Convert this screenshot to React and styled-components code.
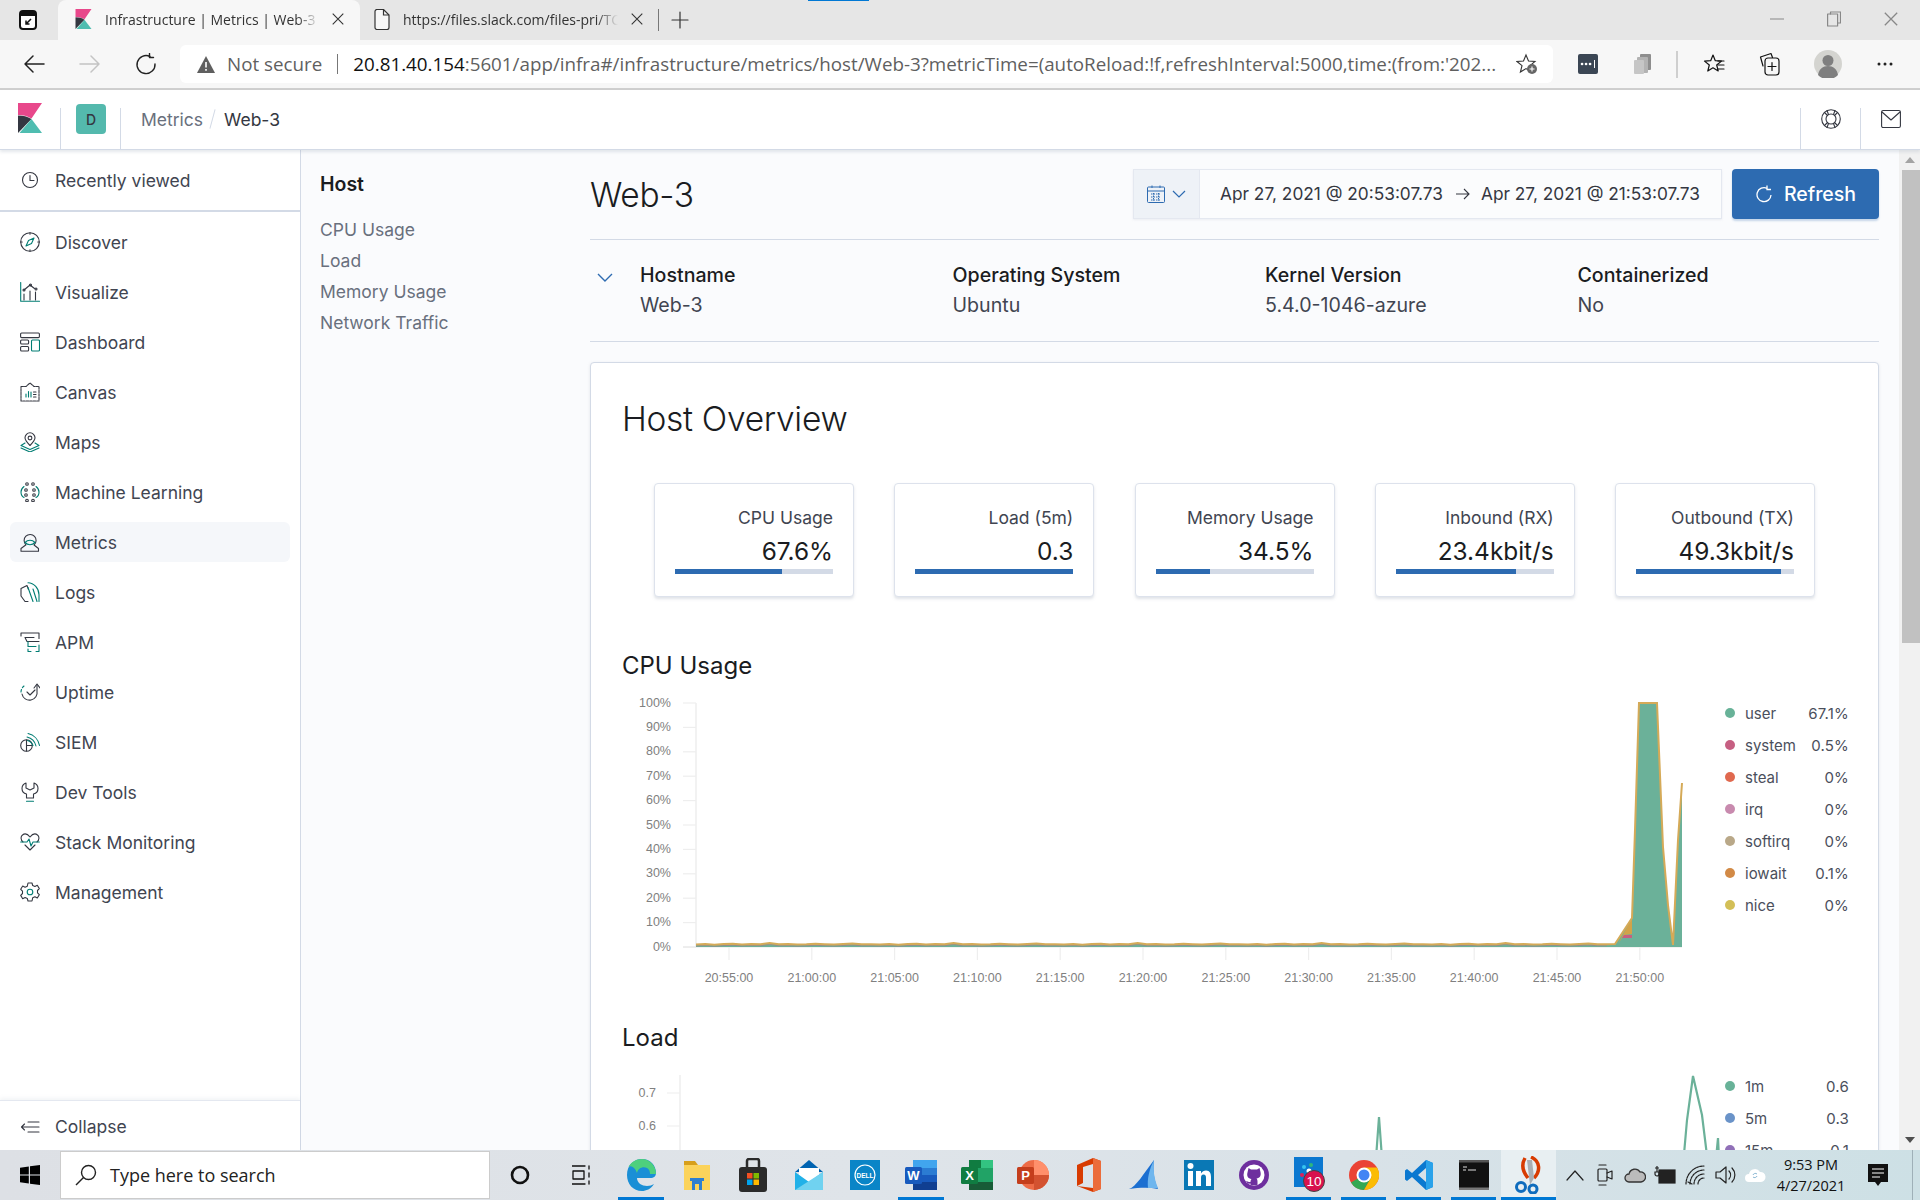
import React from "react";
import styled, { createGlobalStyle } from "styled-components";

const Global = createGlobalStyle`
  html, body { margin: 0; padding: 0; background: #fff; }
  #root { width: 1920px; height: 1200px; overflow: hidden; }
  * { box-sizing: border-box; }
`;

const Page = styled.div`
  width: 1920px; height: 1200px; display: flex; flex-direction: column; overflow: hidden;
  font-family: Inter, "Liberation Sans", sans-serif; color: #343741;
`;

/* ---------- browser chrome ---------- */
const TabStrip = styled.div`
  height: 40px; flex: none; background: #e6e6e6; display: flex; align-items: stretch; position: relative;
  font-family: "Open Sans", "Noto Sans", sans-serif; font-size: 14px; color: #333;
`;
const TopMark = styled.div`position: absolute; left: 808px; top: 0; width: 61px; height: 1px; background: #0078d4;`;
const AppMenu = styled.div`width: 58px; display: flex; align-items: center; justify-content: center; padding-right: 3px;`;
const Tab = styled.div`
  width: ${p => p.$w}px; display: flex; align-items: center; gap: 13px; padding: 0 16px 2px ${p => p.$pad}px;
  border-radius: 8px 8px 0 0; background: ${p => (p.$active ? "#f7f7f7" : "transparent")};
  white-space: nowrap; overflow: hidden;
`;
const TabTitle = styled.span`
  flex: 1; overflow: hidden; white-space: nowrap;
  mask-image: linear-gradient(to right, #000 90%, transparent);
`;
const TabSep = styled.div`width: 1px; height: 22px; background: #777; align-self: center; margin: 0 11px 0 -1px;`;
const NewTab = styled.div`width: 20px; display: flex; align-items: center; justify-content: center;`;
const WinButtons = styled.div`margin-left: auto; display: flex; align-items: center; padding-right: 1px;`;
const WinButton = styled.div`width: 57px; display: flex; justify-content: center; padding-bottom: 2px;`;

const Toolbar = styled.div`
  height: 50px; flex: none; background: #f7f7f7; border-bottom: 2px solid #cfcfcf;
  display: flex; align-items: flex-start; padding-top: 5px;
  font-family: "Open Sans", "Noto Sans", sans-serif;
`;
const NavIcons = styled.div`width: 180px; height: 38px; display: flex; align-items: center; padding-left: 6px;`;
const NavIcon = styled.div`width: 56px; display: flex; justify-content: center;`;
const Address = styled.div`
  width: 1373px; height: 38px; background: #fff; border-radius: 6px; display: flex; align-items: center;
  padding: 0 15px 0 17px; font-size: 18.8px; color: #5f5f5f; white-space: nowrap;
`;
const Secure = styled.span`margin-left: 12px;`;
const Pipe = styled.span`width: 1px; height: 20px; background: #777; margin: 0 15px;`;
const UrlHost = styled.span`color: #111;`;
const Url = styled.span`flex: 1; overflow: hidden;`;
const ToolIcons = styled.div`flex: 1; height: 38px; display: flex; align-items: center;`;
const ToolSlot = styled.div`width: ${p => p.$w}px; display: flex; justify-content: center;`;
const ToolDivider = styled.div`width: 2px; height: 27px; background: #cfcfcf;`;

/* ---------- kibana header ---------- */
const Header = styled.header`
  height: 60px; flex: none; background: #fff; border-bottom: 1px solid #d3dae6;
  box-shadow: 0 2px 3px rgba(152,162,179,.25); display: flex; align-items: stretch; position: relative; z-index: 2;
`;
const LogoCell = styled.div`width: 60px; display: flex; padding: 13px 0 0 18px; position: relative;`;
const SpaceCell = styled.div`width: 59px; padding: 14px 0 0 15px;`;
const Sep = styled.div`width: 1px; background: #d3dae6; margin-top: 18px; flex: none;`;
const Avatar = styled.div`
  width: 30px; height: 30px; border-radius: 4px; background: #54b9ad; color: #343741;
  font-size: 14px; font-weight: 500; display: flex; align-items: center; justify-content: center;
`;
const Crumbs = styled.nav`flex: 1; display: flex; align-items: center; padding: 0 0 1px 20px; font-size: 17.5px;`;
const CrumbLink = styled.span`color: #69707d;`;
const CrumbSlash = styled.span`width: 1px; height: 20px; background: #d3dae6; transform: rotate(15deg); margin: 0 11px 0 9px;`;
const CrumbNow = styled.span`color: #343741;`;
const HeadIcon = styled.div`width: 59px; display: flex; justify-content: center; align-items: center; padding-bottom: 2px;`;

/* ---------- body ---------- */
const Body = styled.div`flex: 1; min-height: 0; display: flex; overflow: hidden;`;
const Sidebar = styled.aside`
  width: 301px; flex: none; background: #fff; border-right: 1px solid #d3dae6; display: flex; flex-direction: column;
  font-size: 17.5px; color: #414551;
`;
const Recent = styled.div`height: 62px; border-bottom: 2px solid #d3dae6; display: flex; padding-top: 5px;`;
const SideList = styled.nav`flex: 1; padding-top: 5px; display: flex; flex-direction: column;`;
const SideItem = styled.div`
  height: 50px; display: flex; align-items: center; margin: 0 10px; padding-left: 10px; gap: 15px; border-radius: 6px;
  ${p => p.$active && "background: #f5f7fa; height: 40px; margin-top: 5px; margin-bottom: 5px;"}
  ${p => p.$flat && "width: 100%;"}
`;
const Collapse = styled.div`
  height: 50px; flex: none; border-top: 1px solid #e4e8f0; box-shadow: 0 -2px 4px rgba(152,162,179,.12);
  display: flex; align-items: center; padding-top: 2px;
`;

const SubNav = styled.nav`
  width: 259px; flex: none; background: #fafbfd; padding: 20px 20px 0 19px; font-size: 17.5px; color: #69707d;
`;
const SubTitle = styled.div`color: #1a1c21; font-size: 19.5px; font-weight: 600; line-height: 28px; margin-bottom: 16px;`;
const SubItem = styled.div`height: 31px; line-height: 31px;`;

const Main = styled.main`flex: 1; min-width: 0; background: #fafbfd; padding: 19px 20px 0 30px;`;
const TitleRow = styled.div`
  display: flex; justify-content: space-between; align-items: center; height: 71px; padding-bottom: 21px;
  border-bottom: 1px solid #d3dae6;
`;
const PageTitle = styled.h1`margin: 0; padding-top: 2px; font-size: 33.5px; font-weight: 300; color: #1a1c21; letter-spacing: -.3px;`;
const DateTools = styled.div`display: flex; gap: 10px;`;
const DateBox = styled.div`
  width: 589px; height: 50px; display: flex; align-items: center; background: #fbfcfd; border: 1px solid #e4e8f0;
  font-size: 17.3px; color: #343741; box-shadow: 0 1px 2px rgba(152,162,179,.15);
`;
const CalBtn = styled.div`
  width: 66px; height: 100%; background: #eef2f7; display: flex; align-items: center; justify-content: center; gap: 7px;
  border-right: 1px solid #e4e8f0; flex: none;
`;
const DateText = styled.span`white-space: nowrap; margin-left: ${p => p.$ml}px;`;
const DateArrow = styled.span`margin-left: 13px; display: flex;`;
const Refresh = styled.button`
  width: 147px; height: 50px; border: 0; border-radius: 4px; background: #2d6bb1; color: #fff; font: inherit;
  font-size: 19.5px; font-weight: 500; display: flex; align-items: center; justify-content: center; gap: 12px;
  box-shadow: 0 2px 2px rgba(45,107,177,.25); padding: 0 0 0 1px;
`;
const MetaRow = styled.div`
  height: 102px; border-bottom: 1px solid #d3dae6; display: flex; padding-top: 20px;
`;
const Chevron = styled.div`width: 50px; flex: none; padding: 7px 0 0 7px;`;
const MetaGrid = styled.div`flex: 1; min-width: 0; display: grid; grid-template-columns: repeat(4, 312.5px);`;
const MetaName = styled.div`font-weight: 500; color: #1a1c21; line-height: 30px; font-size: 19.6px;`;
const MetaVal = styled.div`color: #414551; line-height: 30px; font-size: 19.6px; font-weight: 400;`;

const Card = styled.section`
  margin-top: 20px; background: #fff; border: 1px solid #d3dae6; border-radius: 4px; padding: 34px 31px 0;
  box-shadow: 0 1px 3px rgba(152,162,179,.25);
`;
const CardTitle = styled.h2`margin: 0; font-size: 33.5px; line-height: 44px; font-weight: 300; color: #1a1c21; letter-spacing: -.3px;`;
const Metrics = styled.div`display: flex; justify-content: space-between; margin: 42px 32px 0;`;
const Metric = styled.div`
  width: 200px; height: 114px; background: #fff; border: 1px solid #dde2ec; border-radius: 4px;
  box-shadow: 0 2px 3px rgba(152,162,179,.3); padding: 21px 20px 0; text-align: right;
`;
const MetricLabel = styled.div`font-size: 17.5px; line-height: 26px; color: #414551;`;
const MetricValue = styled.div`font-size: 24.4px; line-height: 34px; color: #1a1c21; font-weight: 400; margin-top: 3px;`;
const Bar = styled.div`height: 5px; background: #d3dae6; margin-top: 1px;`;
const BarFill = styled.div`height: 100%; background: #2d6bb1;`;
const SectionTitle = styled.h3`margin: ${p => p.$mt}px 0 0; font-size: 24px; line-height: 30px; font-weight: 400; color: #1a1c21;`;
const ChartRow = styled.div`display: flex; margin-top: ${p => p.$mt}px;`;
const ChartSvg = styled.svg`flex: none; font-family: "Liberation Sans", sans-serif; font-size: 12.5px;`;
const Legend = styled.div`width: 127px; flex: none; padding-top: ${p => p.$top}px;`;
const LegendRow = styled.div`
  height: 32px; display: flex; align-items: center; font-size: 15px; color: #4b4f5c;
`;
const Dot = styled.span`width: 10px; height: 10px; border-radius: 50%; background: ${p => p.$c}; margin: 0 10px 0 3px; flex: none;`;
const LegendValue = styled.span`margin-left: auto; letter-spacing: .2px;`;

const Scrollbar = styled.div`
  width: 21px; flex: none; background: #f1f1f1; display: flex; flex-direction: column; align-items: center; position: relative;
`;
const ScrollArrow = styled.div`height: 20px; width: 100%; display: flex; align-items: center; justify-content: center;`;
const ScrollThumb = styled.div`width: 18px; height: 473px; background: #c1c1c1; margin-left: 2px;`;
const ScrollGap = styled.div`flex: 1;`;

/* ---------- taskbar ---------- */
const Taskbar = styled.footer`
  height: 50px; flex: none; display: flex; align-items: stretch;
  background: linear-gradient(to right, #dde0e5 0%, #dfe4e9 45%, #d9e2e8 70%, #cde0e5 100%);
  font-family: "Open Sans", "Noto Sans", sans-serif;
`;
const Start = styled.div`width: 60px; display: flex; align-items: center; justify-content: center;`;
const Search = styled.div`
  width: 430px; margin: 1px 0; background: #fff; display: flex; align-items: center; padding-left: 14px; gap: 13px;
  font-size: 18px; color: #222; border: 1px solid #ccc;
`;
const TaskSystem = styled.div`width: ${p => p.$w}px; display: flex; align-items: center; justify-content: center; flex: none;`;
const TaskIcon = styled.div`
  width: ${p => p.$w}px; flex: none; display: flex; align-items: center; justify-content: center; position: relative;
  background: ${p => (p.$hi ? "#e8eff2" : "transparent")};
  ${p => p.$open && `&::after { content: ""; position: absolute; left: ${p.$hi ? 0 : 5}px; right: ${p.$hi ? 0 : 5}px; bottom: 0; height: 3px; background: #0078d4; }`}
`;
const Tray = styled.div`display: flex; padding-left: 4px; flex: none;`;
const TraySlot = styled.div`width: 30px; display: flex; align-items: center; justify-content: center;`;
const Clock = styled.div`
  width: 82px; display: flex; flex-direction: column; align-items: center; justify-content: center;
  font-size: 14.5px; line-height: 21px; color: #111;
`;
const Notify = styled.div`width: 52px; display: flex; align-items: center; justify-content: center;`;
const ShowDesk = styled.div`flex: 1; border-left: 1px solid #9fb0b8; margin-left: 8px;`;

/* ---------- svg icons ---------- */
const Dk = "#343741", Tl = "#017d73";
const Ico = ({ s = 20, children, vb = 20 }) => (
  <svg width={s} height={s} viewBox={`0 0 ${vb} ${vb}`} fill="none" stroke={Dk} strokeWidth="1.1" strokeLinecap="round" strokeLinejoin="round">{children}</svg>
);
const KLogo = ({ w = 24, h = 30 }) => (
  <svg width={w} height={h} viewBox="0 0 24 30">
    <path d="M0 0H24L13.500 15.500C9.500 13 5 12 0 12Z" fill="#e8488b" />
    <path d="M0 12.500C5 12.500 9.500 13.500 13.500 16L0 30Z" fill="#343741" />
    <path d="M13.500 16 24 30H1.500Z" fill="#4fbdb0" />
  </svg>
);
const icons = {
  clock: <Ico><circle cx="10" cy="10" r="7.500" /><path d="M10 5.500V10.500H14" /></Ico>,
  compass: <Ico><circle cx="10" cy="10" r="9.300" /><path d="M6 14 8.500 8.500 14 6l-2.500 5.500Z" stroke={Tl} /><path d="M10 .7v1.500M10 17.800v1.500M.7 10h1.500M17.800 10h1.500" /></Ico>,
  viz: <Ico><path d="M.7 .5V19.300H19.500" stroke={Tl} /><path d="M4 8l6-5 4.500 3.500M4 18v-6M10 18V9M15.500 18v-8" /><circle cx="4" cy="8" r="1" /><circle cx="10.500" cy="3" r="1" /><circle cx="16" cy="7" r="1" /></Ico>,
  dash: <Ico><rect x=".6" y="1" width="18.800" height="4.600" rx="1" /><rect x=".6" y="8" width="8" height="4" rx="1" /><rect x=".6" y="14.500" width="8" height="4.500" rx="1" /><rect x="11.500" y="8" width="8" height="11" rx="1" stroke={Tl} /></Ico>,
  canvas: <Ico><path d="M1 4.500h5l4-3.500 4 3.500h5v14.500H1Z" strokeDasharray="2.500 1" /><path d="M6 15v-3M8.500 15V9.500M11 15v-5" stroke={Tl} /><path d="M13.500 10h2.500M13.500 12.500h2.500M13.500 15h2.500" /></Ico>,
  maps: <Ico><path d="M10 13.500C7 10.500 5 8.500 5 5.800a5 5 0 0 1 10 0C15 8.500 13 10.500 10 13.500Z" /><circle cx="10" cy="6" r="1.900" /><path d="M5 11 1 13.500l9 4 9-4-4-2.500M1 16l9 4 9-4" stroke={Tl} /></Ico>,
  ml: <Ico><path d="M4 4.500C2 6 1 8 1 10s1 4.500 3 5.500M16 4.500c2 1.500 3 3.500 3 5.500s-1 4.500-3 5.500" stroke={Tl} /><g fill="none"><circle cx="7" cy="2" r="1.300" /><circle cx="13" cy="2" r="1.300" /><circle cx="6" cy="8" r="1.300" /><circle cx="14" cy="8" r="1.300" /><circle cx="6" cy="13" r="1.300" /><circle cx="14" cy="13" r="1.300" /><circle cx="7" cy="18.500" r="1.300" /><circle cx="13" cy="18.500" r="1.300" /></g></Ico>,
  metrics: <Ico><path d="M1 19.300V16.500L6 12.800a6 6 0 1 1 8 .2l4.500 3.500v2.800Z" /><path d="M5 10.500c2.800-3 7.200-3 10 0-2.800 3-7.200 3-10 0Z" stroke={Tl} /></Ico>,
  logs: <Ico><path d="M1 6.500 7 3.500l1.500 4M1 6.500V14l4 5.500h3" /><path d="M8 .7c6 0 11 6 11 12v6.800M8 5.500l5 14M13 7l4 12.500" stroke={Tl} /></Ico>,
  apm: <Ico><path d="M1 1h18v5.500M1 1v3M5 5.500l2 4h12M5 5.500h9" /><path d="M8 9.500v5h8M8 17v2.500h3M19 13v6.500h-3" stroke={Tl} /></Ico>,
  uptime: <Ico><path d="M17 3v6a7.500 7.500 0 0 1-15 3" /><path d="M14 6l3-4 3 4M7 10l3 3 5-5" /><path d="M1 10a8 8 0 0 1 3-6" stroke={Tl} strokeDasharray="2.500 2" /></Ico>,
  siem: <Ico><circle cx="6.500" cy="13.500" r="5.800" /><path d="M6.500 8v11M6.500 13.500h5.500" /><path d="M7 5a12 12 0 0 1 9 9M8 1.500a15 15 0 0 1 11.500 12M7.500 8.500a8 8 0 0 1 5.500 5" stroke={Tl} /></Ico>,
  dev: <Ico><path d="M6 1C3.500 2 2 4 2 6.500c0 3 2.500 5 4.500 5.500v4h7v-4c2-.5 4.500-2.500 4.500-5.500C18 4 16.500 2 14 1v5l-4 2-4-2Z" /><path d="M6.500 19.300h7" stroke={Tl} /></Ico>,
  stack: <Ico><path d="M3 10C.5 8 .5 4.500 2.500 3c2.500-2 5.500-.5 7.500 2 2-2.500 5-4 7.500-2 2 1.500 2 5 -.5 7" /><path d="M.7 10H7l2-3 2 7 2-4h6.300" stroke={Tl} /><path d="M5 13l5 5 5-5" /></Ico>,
  gear: <Ico><path d="M8 1h4l.7 2.500 2.200 1 2.400-1.200 2 3.300-1.800 1.900v2.300l1.800 1.900-2 3.300-2.400-1.200-2.200 1L12 19H8l-.7-2.500-2.200-1-2.400 1.200-2-3.300 1.800-1.900V9.200L.7 7.300l2-3.300 2.400 1.200 2.200-1Z" /><circle cx="10" cy="10" r="2.800" stroke={Tl} /></Ico>,
  collapse: <Ico><path d="M8 10H1.500l3-3M1.500 10l3 3M8 5h11M8 10h11M8 15h11" /></Ico>,
};
const sideItems = [
  ["Discover", "compass"], ["Visualize", "viz"], ["Dashboard", "dash"], ["Canvas", "canvas"], ["Maps", "maps"],
  ["Machine Learning", "ml"], ["Metrics", "metrics", true], ["Logs", "logs"], ["APM", "apm"], ["Uptime", "uptime"],
  ["SIEM", "siem"], ["Dev Tools", "dev"], ["Stack Monitoring", "stack"], ["Management", "gear"],
];

const FileIcon = () => (
  <svg width="16" height="21" viewBox="0 0 16 21" fill="#f7f7f7" stroke="#333" strokeWidth="1.200"><path d="M1 2.500a2 2 0 0 1 2-2h6.500L15 6v12.500a2 2 0 0 1-2 2H3a2 2 0 0 1-2-2Z" /><path d="M9.500 .5V6H15" fill="none" /></svg>
);
const XIcon = ({ s = 12, c = "#333" }) => (
  <svg width={s} height={s} viewBox="0 0 12 12" stroke={c} strokeWidth="1.100"><path d="M.7 .7l10.600 10.600M11.300 .7 .7 11.300" /></svg>
);

const taskIcons = [
  { open: 1, el: <svg width="32" height="34" viewBox="0 0 32 34"><path d="M2 17C2 7 9 1 17 1c8 0 14 6 14 14 0 3-2 5-6 5H12c0 5 5 8 10 8 3 0 5-1 7-2-3 5-8 7-12 7C8 33 2 26 2 17Z" fill="#1a8fd6" /><path d="M12 15c1-5 6-7 10-5 2 1 3 3 3 6h6c0-8-6-15-14-15C11 1 6 4 3.500 9 6 7 10 9 12 15Z" fill="#4ed07d" /></svg> },
  { el: <svg width="30" height="30" viewBox="0 0 30 30"><path d="M2 1h11l3 4H2Z" fill="#d79f1b" /><path d="M2 5h26v25H2Z" fill="#fbd35b" /><path d="M8 18h14v3H8Z" fill="#2e7fd0" /><path d="M10 20h10v10h-3v-6h-4v6h-3Z" fill="#2e7fd0" /></svg> },
  { el: <svg width="30" height="34" viewBox="0 0 30 34"><rect x="1" y="9" width="28" height="25" rx="3" fill="#2b2b2b" /><path d="M9 10V3a2 2 0 0 1 2-2h8a2 2 0 0 1 2 2v7" fill="none" stroke="#2b2b2b" strokeWidth="2.500" /><rect x="9" y="15" width="5.500" height="5.500" fill="#f25022" /><rect x="15.500" y="15" width="5.500" height="5.500" fill="#7fba00" /><rect x="9" y="21.500" width="5.500" height="5.500" fill="#00a4ef" /><rect x="15.500" y="21.500" width="5.500" height="5.500" fill="#ffb900" /></svg> },
  { el: <svg width="30" height="32" viewBox="0 0 30 32"><path d="M15 1 29 13H1Z" fill="#0063b1" /><rect x="5" y="9" width="20" height="14" fill="#fff" /><path d="M1 13l14 10 14-10v18H1Z" fill="#21b1e8" /><path d="M1 31 29 13v18Z" fill="#70d2f0" /></svg> },
  { el: <svg width="30" height="30" viewBox="0 0 30 30"><rect width="30" height="30" fill="#0a85c7" /><circle cx="15" cy="15" r="10" fill="none" stroke="#fff" strokeWidth="1.200" /><text x="15" y="17.500" textAnchor="middle" fontSize="6.500" fontWeight="700" fill="#fff" fontFamily="Liberation Sans">DELL</text></svg> },
  { open: 1, el: <svg width="32" height="30" viewBox="0 0 32 30"><rect x="8" y="0" width="24" height="30" rx="1.500" fill="#2b7cd3" /><rect x="8" y="0" width="24" height="8" fill="#41a5ee" /><rect x="8" y="15" width="24" height="8" fill="#185abd" /><rect x="8" y="22" width="24" height="8" fill="#103f91" /><rect x="0" y="7" width="17" height="17" rx="1.500" fill="#185abd" /><text x="8.500" y="20" textAnchor="middle" fontSize="13" fontWeight="700" fill="#fff" fontFamily="Liberation Sans">W</text></svg> },
  { el: <svg width="32" height="30" viewBox="0 0 32 30"><rect x="8" width="24" height="30" rx="1.500" fill="#21a366" /><rect x="8" width="12" height="8" fill="#107c41" /><rect x="20" width="12" height="8" fill="#33c481" /><rect x="8" y="22" width="24" height="8" fill="#185c37" /><rect y="7" width="17" height="17" rx="1.500" fill="#107c41" /><text x="8.500" y="20" textAnchor="middle" fontSize="13" fontWeight="700" fill="#fff" fontFamily="Liberation Sans">X</text></svg> },
  { el: <svg width="32" height="30" viewBox="0 0 32 30"><circle cx="17" cy="15" r="15" fill="#ed6c47" /><path d="M17 0a15 15 0 0 1 15 15H17Z" fill="#ff8f6b" /><path d="M17 15h15a15 15 0 0 1-15 15Z" fill="#d35230" /><rect y="7" width="17" height="17" rx="1.500" fill="#c43e1c" /><text x="8.500" y="20" textAnchor="middle" fontSize="13" fontWeight="700" fill="#fff" fontFamily="Liberation Sans">P</text></svg> },
  { el: <svg width="26" height="34" viewBox="0 0 26 34"><path d="M1 7 17 0l8 3v28l-8 3L1 28l16 2V6L7 9v16L1 28Z" fill="#d83b01" /><path d="M17 0l8 3v28l-8 3Z" fill="#eb6c3a" /></svg> },
  { el: <svg width="32" height="32" viewBox="0 0 32 32"><path d="M1 30C8 28 16 14 26 1c-1 8-1 18 4 29-10-2-20-1-29 0Z" fill="#1b6fd1" /><path d="M26 1c-5 10-7 19-6 28h10C26 20 25 10 26 1Z" fill="#6fb6ee" /></svg> },
  { el: <svg width="30" height="30" viewBox="0 0 30 30"><rect width="30" height="30" fill="#0a78b5" /><rect x="4" y="11" width="5" height="15" fill="#fff" /><circle cx="6.500" cy="6" r="3" fill="#fff" /><path d="M12 11h5v2.500c1-2 3-3 5-3 4 0 5 3 5 6.500v9h-5v-8c0-2-.5-3.500-2.500-3.500S17 16 17 18v8h-5Z" fill="#fff" /></svg> },
  { el: <svg width="30" height="30" viewBox="0 0 30 30"><circle cx="15" cy="15" r="15" fill="#6e2f9e" /><circle cx="15" cy="15" r="10.500" fill="#fff" /><path d="M9.500 8 12 9.500h6L20.500 8l1 4c.8 3.500-.5 6-4 6.500.7.700 1 1.500 1 3V25h-7v-1.500c-2.500.5-3.500-.5-4.500-2.500 1.500.5 2.500 1 4.500 1 0-1.500.5-2.500 1-3-3.500-.5-5-3-4-6.500Z" fill="#6e2f9e" /></svg> },
  { open: 1, el: <svg width="36" height="36" viewBox="0 0 36 36"><rect x="3" width="29" height="30" fill="#0b78d0" /><circle cx="13" cy="10" r="2" fill="#36c5f0" /><circle cx="20" cy="8" r="2" fill="#2eb67d" /><circle cx="11" cy="18" r="2" fill="#e01e5a" /><circle cx="18" cy="14" r="2.500" fill="#fff" /><circle cx="23" cy="24" r="10.500" fill="#d8124e" stroke="#444" strokeWidth="1" /><text x="23" y="29" textAnchor="middle" fontSize="13.500" fill="#fff" fontFamily="Liberation Sans">10</text></svg> },
  { open: 1, el: <svg width="30" height="30" viewBox="0 0 30 30"><circle cx="15" cy="15" r="15" fill="#ea4335" /><path d="M15 15 2 22.500A15 15 0 0 0 15 30l7.500-13Z" fill="#34a853" /><path d="M15 7.500h13A15 15 0 0 1 15 30l7.500-13Z" fill="#fbbc05" /><circle cx="15" cy="15" r="7.500" fill="#fff" /><circle cx="15" cy="15" r="5.500" fill="#4285f4" /></svg> },
  { open: 1, el: <svg width="30" height="32" viewBox="0 0 30 32"><path d="M22 1 29 4v24l-7 3L8 18l-5 4-2-1.500V11.500L3 10l5 4ZM22 9l-8 7 8 7Z" fill="#0a78d0" fillRule="evenodd" /><path d="M22 1 29 4v24l-7 3Z" fill="#2aa2ea" /></svg> },
  { open: 1, el: <svg width="30" height="30" viewBox="0 0 30 30"><rect width="30" height="30" fill="#111" /><rect width="30" height="2.500" fill="#555" /><rect y="27.500" width="30" height="2.500" fill="#777" /><path d="M4 7h4M4 10h3M9 10h8" stroke="#ddd" strokeWidth="1" /></svg> },
  { open: 1, hi: 1, el: <svg width="30" height="38" viewBox="0 0 30 38"><path d="M11 2c-4 7-2 14 3 20M17 1c9 4 10 14 3 21" fill="none" stroke="#d83b01" strokeWidth="3.500" /><path d="M13 4l5 0 2 18-4 7Z" fill="#a9aeb3" /><circle cx="7" cy="31" r="4.500" fill="none" stroke="#0f6cbd" strokeWidth="3" /><circle cx="19" cy="33" r="4" fill="none" stroke="#0f6cbd" strokeWidth="3" /></svg> },
];

const Plain = ({ w = 20, h = 20, vb, children, sw = 1.2, c = "#222" }) => (
  <svg width={w} height={h} viewBox={vb || `0 0 ${w} ${h}`} fill="none" stroke={c} strokeWidth={sw} strokeLinecap="round" strokeLinejoin="round">{children}</svg>
);

/* ---------- chart ---------- */
const bumps = [0, .5, -.2, .4, .8, .1, .5, .3, 1.6, .2, .4, -.1, .2, .8, .3, 0, .5, 1, .2, .3];
const makeBase = () => {
  const pts = [];
  for (let i = 0, x = 696; x <= 1615; x += 9.200, i += 1) pts.push([x, 944.500 - bumps[i % bumps.length]]);
  return pts;
};
const cpuTop = [...makeBase(), [1615, 944], [1632, 918], [1635, 830], [1639, 703], [1657, 703], [1663, 847], [1668, 905], [1673, 945], [1678, 840], [1682, 783]];
const toPath = a => a.map((p, i) => `${i ? "L" : "M"}${p[0].toFixed(1)} ${p[1].toFixed(1)}`).join(" ");
const CPU_TICKS = ["100%", "90%", "80%", "70%", "60%", "50%", "40%", "30%", "20%", "10%", "0%"];
const X_LABELS = ["20:55:00", "21:00:00", "21:05:00", "21:10:00", "21:15:00", "21:20:00", "21:25:00", "21:30:00", "21:35:00", "21:40:00", "21:45:00", "21:50:00"];
const AXIS = "#eeeeee", LBL = "#808080";

const CpuChart = () => (
  <ChartSvg width="1100" height="300" viewBox="622 695 1100 300">
    <path d="M696 703V947" stroke={AXIS} strokeWidth="1.500" />
    {CPU_TICKS.map((t, i) => {
      const y = 703 + i * 24.4;
      return <g key={t}><path d={`M683 ${y}H696`} stroke={AXIS} strokeWidth="1.200" /><text x="671" y={y + 3.500} textAnchor="end" fill={LBL}>{t}</text></g>;
    })}
    <path d="M683 947H1682" stroke="#e6e6e6" strokeWidth="1" />
    {X_LABELS.map((t, i) => {
      const x = 729 + i * 82.8;
      return <g key={t}><path d={`M${x} 947V960`} stroke={AXIS} strokeWidth="1.200" /><text x={x} y="982" textAnchor="middle" fill={LBL}>{t}</text></g>;
    })}
    <path d={`${toPath(cpuTop)} L1682 947 L696 947Z`} fill="#6bb199" />
    <path d="M1618 944 L1624 935 L1632 934 L1632 918Z" fill="#d2a349" />
    <path d="M1618 944 L1624 935 L1632 935 L1632 938 L1622 938Z" fill="#c85f80" />
    <path d={toPath(cpuTop.slice(0, cpuTop.length - 10).map(p => [p[0], p[1] + 1.500]))} stroke="#c85f80" strokeWidth="1" fill="none" opacity=".45" />
    <path d={toPath(cpuTop)} stroke="#d5aa58" strokeWidth="2" fill="none" />
  </ChartSvg>
);
const LoadChart = () => (
  <ChartSvg width="1100" height="200" viewBox="622 1052 1100 200">
    <path d="M680 1075V1252" stroke={AXIS} strokeWidth="1.500" />
    <path d="M667 1093H680M667 1126H680" stroke={AXIS} strokeWidth="1.200" />
    <text x="656" y="1097" textAnchor="end" fill={LBL}>0.7</text>
    <text x="656" y="1130" textAnchor="end" fill={LBL}>0.6</text>
    <path d="M1373 1200 L1379 1117 L1385 1200M1680 1200 L1687 1120 L1693 1076 L1702 1115 L1710 1180 L1713 1190 L1718 1138 L1721 1200" fill="none" stroke="#6bb199" strokeWidth="2.200" />
  </ChartSvg>
);

const cpuLegend = [["user", "67.1%", "#68b298"], ["system", "0.5%", "#c65f82"], ["steal", "0%", "#e0694f"], ["irq", "0%", "#c88aae"], ["softirq", "0%", "#b9a888"], ["iowait", "0.1%", "#d28a46"], ["nice", "0%", "#d3bf57"]];
const loadLegend = [["1m", "0.6", "#68b298"], ["5m", "0.3", "#6a93c8"], ["15m", "0.1", "#9170b8"]];
const metrics = [["CPU Usage", "67.6%", 67.6], ["Load (5m)", "0.3", 100], ["Memory Usage", "34.5%", 34.5], ["Inbound (RX)", "23.4kbit/s", 76], ["Outbound (TX)", "49.3kbit/s", 92]];
const meta = [["Hostname", "Web-3"], ["Operating System", "Ubuntu"], ["Kernel Version", "5.4.0-1046-azure"], ["Containerized", "No"]];

const ChartLegend = ({ rows, top }) => (
  <Legend $top={top}>
    {rows.map(([n, v, c]) => <LegendRow key={n}><Dot $c={c} /><span>{n}</span><LegendValue>{v}</LegendValue></LegendRow>)}
  </Legend>
);

export default function App() {
  return (
    <Page>
      <Global />
      <TabStrip>
        <TopMark />
        <AppMenu>
          <svg width="18" height="20" viewBox="0 0 18 20"><rect x="1" y="1" width="16" height="18" rx="3" fill="#fff" stroke="#111" strokeWidth="2" /><rect x="1" y="1" width="16" height="5" fill="#111" /><path d="M12 9 7 14M7 10.500V14h3.500" stroke="#111" fill="none" strokeWidth="1.500" /></svg>
        </AppMenu>
        <Tab $active $w={302} $pad={17}>
          <KLogo w={17} h={20} />
          <TabTitle>Infrastructure | Metrics | Web-3 -</TabTitle>
          <XIcon />
        </Tab>
        <Tab $w={299} $pad={14}>
          <FileIcon />
          <TabTitle>https://files.slack.com/files-pri/TC</TabTitle>
          <XIcon />
        </Tab>
        <TabSep />
        <NewTab><Plain w={18} h={18} c="#333"><path d="M9 1v16M1 9h16" /></Plain></NewTab>
        <WinButtons>
          <WinButton><Plain w={14} h={14} c="#888"><path d="M0 7h14" /></Plain></WinButton>
          <WinButton><Plain w={14} h={16} c="#888"><rect x=".6" y="3" width="10" height="12" /><path d="M3.500 3V1h10v11h-3" /></Plain></WinButton>
          <WinButton><XIcon s={14} c="#888" /></WinButton>
        </WinButtons>
      </TabStrip>
      <Toolbar>
        <NavIcons>
          <NavIcon><Plain w={22} h={20} c="#222" sw={1.500}><path d="M21 10H2M10 2l-8 8 8 8" /></Plain></NavIcon>
          <NavIcon><Plain w={22} h={20} c="#c4c4c4" sw={1.500}><path d="M1 10h19M12 2l8 8-8 8" /></Plain></NavIcon>
          <NavIcon><Plain w={22} h={22} c="#222" sw={1.400}><path d="M15 3.500A9 9 0 1 0 20 11" /><path d="M14.500 0.500v4h4" /></Plain></NavIcon>
        </NavIcons>
        <Address>
          <svg width="18" height="17" viewBox="0 0 18 17"><path d="M9 0 18 17H0Z" fill="#5f5f5f" /><path d="M9 6v5.500M9 13v1.800" stroke="#fff" strokeWidth="1.600" /></svg>
          <Secure>Not secure</Secure>
          <Pipe />
          <Url><UrlHost>20.81.40.154</UrlHost>:5601/app/infra#/infrastructure/metrics/host/Web-3?metricTime=(autoReload:!f,refreshInterval:5000,time:(from:'202...</Url>
          <svg width="22" height="22" viewBox="0 0 22 22"><path d="M10 2l2.500 6 6.500.5-5 4.200 1.600 6.300L10 15.600 4.400 19 6 12.700 1 8.500 7.500 8Z" fill="none" stroke="#333" strokeWidth="1.100" /><circle cx="16" cy="16" r="5" fill="#666" /><path d="M16 13.500v5M13.500 16h5" stroke="#fff" strokeWidth="1.100" /></svg>
        </Address>
        <ToolIcons>
          <ToolSlot $w={70}><svg width="20" height="20" viewBox="0 0 20 20"><rect width="20" height="20" rx="2" fill="#3b4654" /><path d="M4 10h.1M8 10h.1M12 10h.1" stroke="#fff" strokeWidth="2.600" strokeLinecap="round" /><path d="M16.500 6v8" stroke="#fff" strokeWidth="1" /></svg></ToolSlot>
          <ToolSlot $w={40}><svg width="20" height="22" viewBox="0 0 20 22"><rect x="7" y="1" width="11" height="16" rx="1" fill="#8e8e8e" /><rect x="4" y="4" width="11" height="16" rx="1" fill="#b3b3b3" /><rect x="1" y="7" width="10" height="14" rx="1" fill="#c6c6c6" /></svg></ToolSlot>
          <ToolSlot $w={28}><ToolDivider /></ToolSlot>
          <ToolSlot $w={46}><Plain w={22} h={22} c="#111"><path d="M10 2l2.300 5.700 6.200.4-4.800 3.900 1.500 6L10 14.800 4.800 18l1.500-6L1.500 8.100l6.200-.4Z" /><path d="M15 8h6M15 12h6M15 16h6" /></Plain></ToolSlot>
          <ToolSlot $w={66}><Plain w={22} h={24} c="#111"><path d="M4 14 1.500 5 12 1.500l1.500 4" /><rect x="6" y="6" width="14" height="17" rx="3" /><path d="M13 10.500v8M9 14.500h8" /></Plain></ToolSlot>
          <ToolSlot $w={50}><svg width="28" height="28" viewBox="0 0 28 28"><circle cx="14" cy="14" r="14" fill="#d4d4d0" /><circle cx="14" cy="10.500" r="5.500" fill="#7f7f7f" /><path d="M4 25c1-6 5-9 10-9s9 3 10 9a14 14 0 0 1-20 0Z" fill="#7f7f7f" /></svg></ToolSlot>
          <ToolSlot $w={64}><svg width="16" height="4" viewBox="0 0 16 4" fill="#222"><circle cx="2" cy="2" r="1.500" /><circle cx="8" cy="2" r="1.500" /><circle cx="14" cy="2" r="1.500" /></svg></ToolSlot>
        </ToolIcons>
      </Toolbar>
      <Header>
        <LogoCell><KLogo /></LogoCell>
        <Sep />
        <SpaceCell><Avatar>D</Avatar></SpaceCell>
        <Sep />
        <Crumbs><CrumbLink>Metrics</CrumbLink><CrumbSlash /><CrumbNow>Web-3</CrumbNow></Crumbs>
        <Sep />
        <HeadIcon><Plain w={20} h={20} c="#343741" sw={1.100}><circle cx="10" cy="10" r="9.300" /><circle cx="10" cy="10" r="5" /><path d="M3.500 3.500 6.500 6.500M16.500 3.500l-3 3M3.500 16.500l3-3M16.500 16.500l-3-3M6 1.500l1.500 4M14 1.500l-1.500 4M6 18.500l1.500-4M14 18.500l-1.500-4" /></Plain></HeadIcon>
        <Sep />
        <HeadIcon><Plain w={20} h={20} c="#343741" sw={1.100}><rect x=".6" y="1.500" width="18.800" height="17" rx="1.500" /><path d="M1 3l9 8 9-8" /></Plain></HeadIcon>
      </Header>
      <Body>
        <Sidebar>
          <Recent><SideItem $flat>{icons.clock}<span>Recently viewed</span></SideItem></Recent>
          <SideList>
            {sideItems.map(([label, ic, active]) => (
              <SideItem key={label} $active={active}>{icons[ic]}<span>{label}</span></SideItem>
            ))}
          </SideList>
          <Collapse><SideItem $flat>{icons.collapse}<span>Collapse</span></SideItem></Collapse>
        </Sidebar>
        <SubNav>
          <SubTitle>Host</SubTitle>
          {["CPU Usage", "Load", "Memory Usage", "Network Traffic"].map(t => <SubItem key={t}>{t}</SubItem>)}
        </SubNav>
        <Main>
          <TitleRow>
            <PageTitle>Web-3</PageTitle>
            <DateTools>
              <DateBox>
                <CalBtn>
                  <svg width="18" height="18" viewBox="0 0 18 18" fill="none" stroke="#2d6bb1" strokeWidth="1"><rect x=".5" y="2" width="17" height="15.500" rx="1" /><path d="M.5 6h17M5 .5V3M13 .5V3" /><path d="M4 9h10M4 12h10M4 15h10M6.500 8v8M11.500 8v8" strokeDasharray="1.500 1" /></svg>
                  <svg width="14" height="8" viewBox="0 0 14 8" fill="none" stroke="#2d6bb1" strokeWidth="1.200"><path d="M1 1l6 6 6-6" /></svg>
                </CalBtn>
                <DateText $ml={20}>Apr 27, 2021 @ 20:53:07.73</DateText>
                <DateArrow><svg width="14" height="12" viewBox="0 0 14 12" fill="none" stroke="#343741" strokeWidth="1.100"><path d="M0 6h13M8 1l5 5-5 5" /></svg></DateArrow>
                <DateText $ml={11}>Apr 27, 2021 @ 21:53:07.73</DateText>
              </DateBox>
              <Refresh>
                <svg width="16" height="18" viewBox="0 0 16 18" fill="none" stroke="#fff" strokeWidth="1.300"><path d="M11 3.300A7 7 0 1 0 15 10" /><path d="M11 .5v4h4" /></svg>
                <span>Refresh</span>
              </Refresh>
            </DateTools>
          </TitleRow>
          <MetaRow>
            <Chevron><svg width="16" height="10" viewBox="0 0 16 10" fill="none" stroke="#2d6bb1" strokeWidth="1.400"><path d="M1 1l7 7 7-7" /></svg></Chevron>
            <MetaGrid>
              {meta.map(([n, v]) => <div key={n}><MetaName>{n}</MetaName><MetaVal>{v}</MetaVal></div>)}
            </MetaGrid>
          </MetaRow>
          <Card>
            <CardTitle>Host Overview</CardTitle>
            <Metrics>
              {metrics.map(([l, v, pct]) => (
                <Metric key={l}>
                  <MetricLabel>{l}</MetricLabel>
                  <MetricValue>{v}</MetricValue>
                  <Bar><BarFill style={{ width: `${pct}%` }} /></Bar>
                </Metric>
              ))}
            </Metrics>
            <SectionTitle $mt={54}>CPU Usage</SectionTitle>
            <ChartRow $mt={14}><CpuChart /><ChartLegend rows={cpuLegend} top={2} /></ChartRow>
            <SectionTitle $mt={28}>Load</SectionTitle>
            <ChartRow $mt={-1}><LoadChart /><ChartLegend rows={loadLegend} top={18} /></ChartRow>
          </Card>
        </Main>
        <Scrollbar>
          <ScrollArrow><svg width="10" height="6" viewBox="0 0 10 6" fill="#a3a3a3"><path d="M5 0l5 6H0Z" /></svg></ScrollArrow>
          <ScrollThumb />
          <ScrollGap />
          <ScrollArrow><svg width="10" height="6" viewBox="0 0 10 6" fill="#505050"><path d="M5 6 0 0h10Z" /></svg></ScrollArrow>
        </Scrollbar>
      </Body>
      <Taskbar>
        <Start><svg width="20" height="20" viewBox="0 0 20 20" fill="#000"><path d="M0 2.800 8.800 1.500V9.500H0ZM10 1.300 20 0V9.500H10ZM0 10.500H8.800V18.500L0 17.200ZM10 10.500H20V20L10 18.700Z" /></svg></Start>
        <Search>
          <svg width="22" height="22" viewBox="0 0 22 22" fill="none" stroke="#222" strokeWidth="1.400"><circle cx="13.500" cy="8.500" r="7" /><path d="M8.500 13.500 1 21" /></svg>
          <span>Type here to search</span>
        </Search>
        <TaskSystem $w={60}><svg width="20" height="20" viewBox="0 0 20 20" fill="none" stroke="#111" strokeWidth="2.600"><circle cx="10" cy="10" r="8" /></svg></TaskSystem>
        <TaskSystem $w={63}><Plain w={20} h={20} c="#111" sw={1.300}><path d="M0 1h13M0 19h13M1 6h11v8H1ZM17 1v3M17 8v4M17 16v3" /></Plain></TaskSystem>
        {taskIcons.map((t, i) => <TaskIcon key={i} $w={i < 8 ? 56 : 55} $open={t.open} $hi={t.hi}>{t.el}</TaskIcon>)}
        <Tray>
          <TraySlot><Plain w={18} h={12} c="#222"><path d="M1 11l8-9 8 9" /></Plain></TraySlot>
          <TraySlot><Plain w={18} h={26} c="#222"><rect x="2" y="7" width="9" height="12" rx="1" /><path d="M11 11l5-2v8l-5-2M3 3h7M3 23h7" /></Plain></TraySlot>
          <TraySlot><svg width="22" height="18" viewBox="0 0 22 18" fill="#bbb" stroke="#333" strokeWidth="1.300"><path d="M5 16a4 4 0 0 1 0-8 6 6 0 0 1 11-2 5 5 0 0 1 1 10Z" /></svg></TraySlot>
          <TraySlot><svg width="22" height="20" viewBox="0 0 22 20" fill="none" stroke="#222" strokeWidth="1.200"><rect x="5" y="5" width="16" height="13" fill="#222" /><path d="M3 1v6M1 3h4M1 7h4v2a2 2 0 0 1-4 0Z" /></svg></TraySlot>
          <TraySlot><Plain w={20} h={20} c="#222"><path d="M1 19a18 18 0 0 1 18-18M5 19A14 14 0 0 1 19 5M9 19a10 10 0 0 1 10-10M13 19a6 6 0 0 1 6-6" strokeDasharray="2 1" /><path d="M3 17l4 2" /></Plain></TraySlot>
          <TraySlot><Plain w={22} h={20} c="#222"><path d="M2 7h4l6-5v16l-6-5H2ZM15 6a6 6 0 0 1 0 8M18 3a10 10 0 0 1 0 14" /></Plain></TraySlot>
          <TraySlot><svg width="22" height="18" viewBox="0 0 22 18" fill="#fff"><path d="M5 16a4 4 0 0 1 0-8 6 6 0 0 1 11-2 5 5 0 0 1 1 10Z" /><path d="M9 9a2.500 2.500 0 0 1 4-1M13 10a2.500 2.500 0 0 1-4 1" stroke="#8bb8d4" strokeWidth="1" fill="none" /></svg></TraySlot>
        </Tray>
        <Clock><span>9:53 PM</span><span>4/27/2021</span></Clock>
        <Notify><svg width="20" height="22" viewBox="0 0 20 22"><path d="M0 0h20v18h-7l-3 4-3-4H0Z" fill="#111" /><path d="M4 5h12M4 9h12M4 13h8" stroke="#fff" strokeWidth="1" /></svg></Notify>
        <ShowDesk />
      </Taskbar>
    </Page>
  );
}
